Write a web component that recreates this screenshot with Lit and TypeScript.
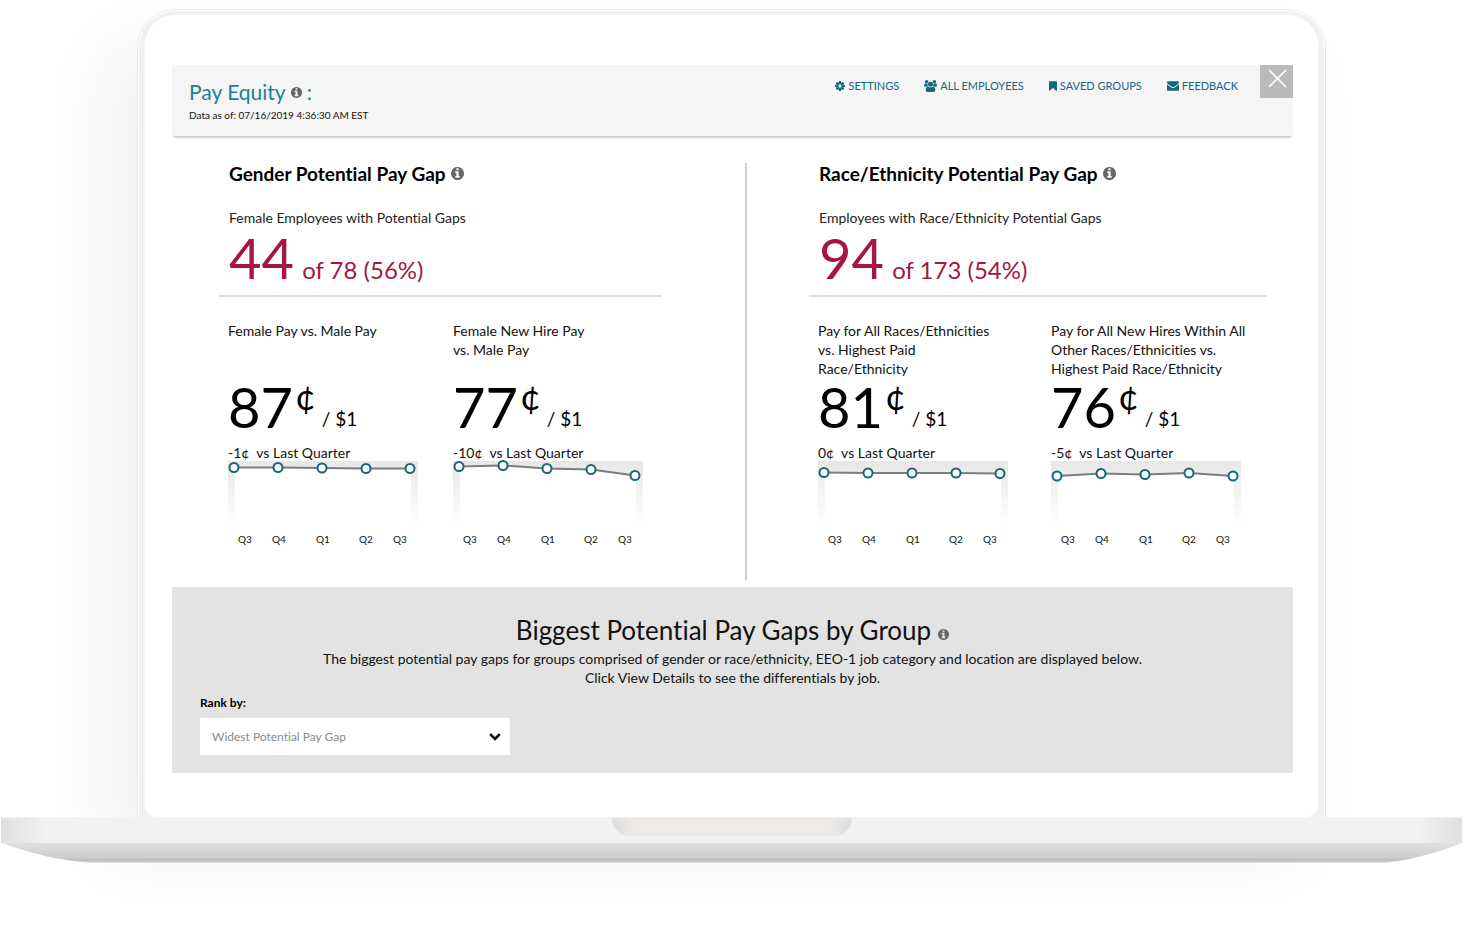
import { LitElement, html, svg, css } from "lit";
import { customElement, property } from "lit/decorators.js";

const ICONS: Record<string, { box: string; d: string }> = {
  info: {
    box: "128 128 1536 1536",
    d: "M1152 1376v-160q0-14-9-23t-23-9h-96v-512q0-14-9-23t-23-9h-320q-14 0-23 9t-9 23v160q0 14 9 23t23 9h96v320h-96q-14 0-23 9t-9 23v160q0 14 9 23t23 9h448q14 0 23-9t9-23zm-128-896v-160q0-14-9-23t-23-9h-192q-14 0-23 9t-9 23v160q0 14 9 23t23 9h192q14 0 23-9t9-23zm640 416q0 209-103 385.5t-279.5 279.5-385.5 103-385.5-103-279.5-279.5-103-385.5 103-385.5 279.5-279.5 385.5-103 385.5 103 279.5 279.5 103 385.5z",
  },
  cog: {
    box: "128 128 1536 1536",
    d: "M1152 896q0-106-75-181t-181-75-181 75-75 181 75 181 181 75 181-75 75-181zm512-109v222q0 12-8 23t-20 13l-185 28q-19 54-39 91 35 50 107 138 10 12 10 25t-9 23q-27 37-99 108t-94 71q-12 0-26-9l-138-108q-44 23-91 38-16 136-29 186-7 28-36 28h-222q-14 0-24.5-8.5t-11.5-21.5l-28-184q-49-16-90-37l-141 107q-10 9-25 9-14 0-25-11-126-114-165-168-7-10-7-23 0-12 8-23 15-21 51-66.5t54-70.5q-27-50-41-99l-183-27q-13-2-21-12.5t-8-23.5v-222q0-12 8-23t19-13l186-28q14-46 39-92-40-57-107-138-10-12-10-24 0-10 9-23 26-36 98.5-107.5t94.5-71.5q13 0 26 10l138 107q44-23 91-38 16-136 29-186 7-28 36-28h222q14 0 24.5 8.5t11.5 21.5l28 184q49 16 90 37l142-107q9-9 24-9 13 0 25 10 129 119 165 170 7 8 7 22 0 12-8 23-15 21-51 66.5t-54 70.5q26 50 41 98l183 28q13 2 21 12.5t8 23.5z",
  },
  users: {
    box: "-64 0 1920 1792",
    d: "M529 896q-162 5-265 128h-134q-82 0-138-40.5t-56-118.5q0-353 124-353 6 0 43.5 21t97.5 42.5 119 21.5q67 0 133-23-5 37-5 66 0 139 81 256zm1071 637q0 120-73 189.5t-194 69.5h-874q-121 0-194-69.5t-73-189.5q0-53 3.5-103.5t14-109 26.5-108.5 43-97.5 62-81 85.5-53.5 111.5-20q10 0 43 21.5t73 48 107 48 135 21.5 135-21.5 107-48 73-48 43-21.5q61 0 111.5 20t85.5 53.5 62 81 43 97.5 26.5 108.5 14 109 3.5 103.5zm-1024-1277q0 106-75 181t-181 75-181-75-75-181 75-181 181-75 181 75 75 181zm704 384q0 159-112.5 271.5t-271.5 112.5-271.5-112.5-112.5-271.5 112.5-271.5 271.5-112.5 271.5 112.5 112.5 271.5zm576 225q0 78-56 118.5t-138 40.5h-134q-103-123-265-128 81-117 81-256 0-29-5-66 66 23 133 23 59 0 119-21.5t97.5-42.5 43.5-21q124 0 124 353zm-128-609q0 106-75 181t-181 75-181-75-75-181 75-181 181-75 181 75 75 181z",
  },
  bookmark: {
    box: "256 128 1280 1536",
    d: "M1420 128q23 0 44 9 33 13 52.5 41t19.5 62v1289q0 34-19.5 62t-52.5 41q-19 8-44 8-48 0-83-32l-441-424-441 424q-36 33-83 33-23 0-44-9-33-13-52.5-41t-19.5-62v-1289q0-34 19.5-62t52.5-41q21-9 44-9h1048z",
  },
  mail: {
    box: "0 256 1792 1408",
    d: "M1792 710v794q0 66-47 113t-113 47h-1472q-66 0-113-47t-47-113v-794q44 49 101 87 362 246 497 345 57 42 92.5 65.5t94.5 48 110 24.5h2q51 0 110-24.5t94.5-48 92.5-65.5q170-123 498-345 57-39 100-87zm0-294q0 79-49 151t-122 123q-376 261-468 325-10 7-42.5 31t-54 38.5-52 32.5-57.5 27-50 9h-2q-23 0-50-9t-57.5-27-52-32.5-54-38.5-42.5-31q-91-64-262-182.5t-205-142.5q-62-42-117-115.5t-55-136.5q0-78 41.5-130t118.5-52h1472q65 0 112.5 47t47.5 113z",
  },
};

const icon = (name: string, cls: string) => html`
  <svg class=${cls} viewBox=${ICONS[name].box} aria-hidden="true">
    <path fill="currentColor" d=${ICONS[name].d}></path>
  </svg>
`;

interface Metric {
  label: string;
  cents: number;
  change: string;
  points: number[];
}

interface Gap {
  title: string;
  subtitle: string;
  count: number;
  rest: string;
  cls: string;
  metrics: Metric[];
}

const GAPS: Gap[] = [
  {
    title: "Gender Potential Pay Gap",
    subtitle: "Female Employees with Potential Gaps",
    count: 44,
    rest: "of 78 (56%)",
    cls: "gender",
    metrics: [
      { label: "Female Pay vs. Male Pay", cents: 87, change: "-1¢", points: [6.5, 6.5, 7, 7.5, 7.5] },
      { label: "Female New Hire Pay\nvs. Male Pay", cents: 77, change: "-10¢", points: [5.5, 4.5, 7.5, 8.5, 14.5] },
    ],
  },
  {
    title: "Race/Ethnicity Potential Pay Gap",
    subtitle: "Employees with Race/Ethnicity Potential Gaps",
    count: 94,
    rest: "of 173 (54%)",
    cls: "race",
    metrics: [
      { label: "Pay for All Races/Ethnicities\nvs. Highest Paid\nRace/Ethnicity", cents: 81, change: "0¢", points: [11.5, 12, 12, 12, 12.5] },
      { label: "Pay for All New Hires Within All\nOther Races/Ethnicities vs.\nHighest Paid Race/Ethnicity", cents: 76, change: "-5¢", points: [15, 12.5, 13.5, 12, 15] },
    ],
  },
];

@customElement("trend-chart")
export class TrendChart extends LitElement {
  @property({ attribute: false }) points: number[] = [];

  static styles = css`
    :host { display: block; }
    .chart { display: block; width: 190px; height: 86px; overflow: visible; }
    .tick { font: 10px Lato, "Liberation Sans", sans-serif; fill: #111; text-anchor: middle; }
    .line { fill: none; stroke: #7d7d7d; stroke-width: 2; }
    .dot { fill: #fff; stroke: #14687c; stroke-width: 2; }
  `;

  render() {
    const xs = [6, 50, 94, 138, 182];
    const labelXs = [17, 51, 95, 138, 172];
    const quarters = ["Q3", "Q4", "Q1", "Q2", "Q3"];
    const path = this.points.map((y, i) => `${xs[i]},${y}`).join(" ");
    return html`
      <svg class="chart" viewBox="0 0 190 86" role="img" aria-label="Quarterly trend">
        <defs>
          <linearGradient id="fade" x1="0" y1="0" x2="0" y2="1">
            <stop offset="0" stop-color="#e7e7e7"></stop>
            <stop offset="1" stop-color="#ffffff"></stop>
          </linearGradient>
        </defs>
        <rect width="190" height="62" fill="url(#fade)"></rect>
        <polygon fill="#fff" points="7,${this.points[0]} ${path} 183,${this.points[4]} 183,62 7,62"></polygon>
        <polyline class="line" points=${path}></polyline>
        ${this.points.map((y, i) => svg`<circle class="dot" cx=${xs[i]} cy=${y} r="4.5"></circle>`)}
        ${quarters.map((q, i) => svg`<text class="tick" x=${labelXs[i]} y="82">${q}</text>`)}
      </svg>
    `;
  }
}

@customElement("app-root")
export class AppRoot extends LitElement {
  static styles = css`
    :host {
      display: block;
      min-height: 100vh;
      overflow: hidden;
      background: #fff;
      color: #111;
      font-family: Lato, "Liberation Sans", sans-serif;
      font-size: 14px;
      font-variant-ligatures: none;
      line-height: 19px;
    }
    * { box-sizing: border-box; }
    h1, h2, p { margin: 0; font-weight: 400; }
    .laptop { padding-top: 9px; }
    .lid {
      margin: 0 137px;
      padding: 1px 1px 0;
      border-radius: 38px 38px 0 0;
      background: #e9e9e9;
      box-shadow: -30px 36px 70px rgba(0, 0, 0, 0.06);
    }
    .rim {
      padding: 1px 1px 0;
      border-radius: 37px 37px 0 0;
      background: #fff;
    }
    .bezel {
      padding: 4px 6px 0;
      border-radius: 36px 36px 0 0;
      background: #f1f1f1;
    }
    .screen {
      padding: 50px 25px 44px 27px;
      border-radius: 30px 30px 12px 12px;
      background: #fff;
    }
    .deck {
      position: relative;
      display: flex;
      justify-content: center;
      height: 26px;
      margin: 0 1px;
      border-top: 1px solid #f4f4f4;
      background: linear-gradient(90deg, #dfdfdf, #f2f2f2 44px, #f2f2f2 calc(100% - 44px), #dfdfdf);
    }
    .notch {
      width: 240px;
      height: 18px;
      border-radius: 0 0 18px 18px;
      background: linear-gradient(90deg, #dedddc, #edeae8 22px, #edeae8 calc(100% - 22px), #dedddc);
    }
    .belly {
      position: relative;
      height: 20px;
      margin: 0 1px;
      background: linear-gradient(#e0e0e0, #cdcdcd 15px, #bcbcbc 17px, #c4c4c4 18px, #e2e2e2);
      clip-path: polygon(0 0, 100% 0, calc(100% - 25px) 9px, calc(100% - 52px) 16px, calc(100% - 78px) 20px,
        90px 20px, 72px 18px, 48px 14px, 25px 8px);
    }
    .top {
      display: flex;
      justify-content: space-between;
      align-items: flex-start;
      height: 71px;
      border-radius: 0 0 4px 4px;
      background: #f5f5f5;
      box-shadow: 0 3px 2px -1px #ccc;
    }
    .brand { padding: 14px 0 0 17px; }
    .brand-title {
      display: flex;
      align-items: center;
      gap: 5px;
      color: #1a8199;
      font-size: 21px;
      line-height: 26px;
    }
    .stamp { font-size: 10px; line-height: 20px; color: #111; }
    .info { flex: none; color: #666; }
    .s { width: 11px; height: 11px; }
    .m { width: 13px; height: 13px; }
    .tools { display: flex; align-items: flex-start; }
    .nav { display: flex; gap: 25px; padding: 11px 22px 0 0; }
    .link {
      display: flex;
      align-items: center;
      gap: 3px;
      color: #14687c;
      font-size: 11px;
      text-decoration: none;
    }
    .cog { width: 10px; height: 10px; }
    .users { width: 13px; height: 12px; }
    .bookmark { width: 8px; height: 10px; }
    .mail { width: 12px; height: 10px; }
    .close {
      display: flex;
      align-items: flex-start;
      width: 33px;
      height: 33px;
      padding: 4px 0 0 8px;
      border: 0;
      background: #bababa;
      cursor: pointer;
    }
    .cross { display: block; width: 19px; height: 19px; }
    .panels { display: grid; grid-template-columns: 573px minmax(0, 1fr); padding: 27px 0 7px; }
    .panel { height: 417px; }
    .gender { padding-right: 83px; padding-left: 47px; }
    .race { padding-right: 26px; padding-left: 62px; border-left: 2px solid #ccc; }
    .summary { height: 134px; padding-left: 10px; border-bottom: 2px solid #dcdcdc; }
    .heading {
      display: flex;
      align-items: center;
      gap: 5px;
      font-size: 19px;
      font-weight: 700;
      line-height: 21px;
      color: #000;
    }
    .subtitle { padding-top: 24px; line-height: 20px; color: #222; }
    .count { color: #a5173f; font-size: 24px; line-height: 60px; white-space: nowrap; }
    .count .big { padding-right: 2px; }
    .big { font-size: 56px; }
    .metrics { display: grid; grid-template-columns: 225px minmax(0, 1fr); padding: 24px 0 0 9px; }
    .race .metrics { grid-template-columns: 233px minmax(0, 1fr); }
    .label { height: 57px; white-space: pre; }
    .pay { display: flex; height: 65px; color: #000; font-size: 19px; line-height: 56px; }
    .pay .big { line-height: 57px; }
    .cent { padding: 0 6px 0 2px; font-size: 36px; line-height: 36px; }
    .per { padding-top: 13px; }
    .change { height: 18px; white-space: pre; }
    .groups { padding: 26px 28px 18px; background: #e3e3e3; }
    .groups-title {
      display: flex;
      justify-content: center;
      align-items: baseline;
      gap: 7px;
      color: #111;
      font-size: 26px;
      line-height: 34px;
    }
    .lead { padding-top: 2px; text-align: center; }
    .rank { display: block; padding-top: 6px; font-size: 12px; font-weight: 700; line-height: 19px; color: #000; }
    .picker { position: relative; width: 310px; margin-top: 6px; }
    .select {
      display: block;
      width: 100%;
      height: 37px;
      padding: 0 40px 0 12px;
      border: 0;
      border-radius: 0;
      appearance: none;
      background: #fff;
      color: #8a8a8a;
      font: 12px Lato, "Liberation Sans", sans-serif;
      font-variant-ligatures: none;
    }
    .chevron { position: absolute; top: 15px; right: 9px; width: 12px; height: 8px; pointer-events: none; }
  `;

  private renderMetric(m: Metric) {
    return html`
      <article>
        <p class="label">${m.label}</p>
        <p class="pay"><span class="big">${m.cents}</span><span class="cent">¢</span><span class="per">/ $1</span></p>
        <p class="change">${m.change}  vs Last Quarter</p>
        <trend-chart .points=${m.points}></trend-chart>
      </article>
    `;
  }

  private renderGap(g: Gap) {
    return html`
      <section class="panel ${g.cls}">
        <div class="summary">
          <h2 class="heading">${g.title}${icon("info", "info m")}</h2>
          <p class="subtitle">${g.subtitle}</p>
          <p class="count"><span class="big">${g.count}</span> ${g.rest}</p>
        </div>
        <div class="metrics">${g.metrics.map((m) => this.renderMetric(m))}</div>
      </section>
    `;
  }

  render() {
    const links = [
      ["cog", "SETTINGS"],
      ["users", "ALL EMPLOYEES"],
      ["bookmark", "SAVED GROUPS"],
      ["mail", "FEEDBACK"],
    ];
    return html`
      <div class="laptop">
        <div class="lid"><div class="rim"><div class="bezel">
          <main class="screen">
            <header class="top">
              <div class="brand">
                <h1 class="brand-title">Pay Equity ${icon("info", "info s")} <span>:</span></h1>
                <p class="stamp">Data as of: 07/16/2019 4:36:30 AM EST</p>
              </div>
              <div class="tools">
                <nav class="nav">
                  ${links.map(([name, text]) => html`<a class="link" href="#">${icon(name, name)}${text}</a>`)}
                </nav>
                <button class="close" type="button" aria-label="Close">
                  <svg class="cross" viewBox="0 0 19 19" aria-hidden="true">
                    <path d="M1 1l17 17M18 1L1 18" stroke="#fff" stroke-width="1.6" fill="none"></path>
                  </svg>
                </button>
              </div>
            </header>
            <div class="panels">${GAPS.map((g) => this.renderGap(g))}</div>
            <section class="groups">
              <h2 class="groups-title">Biggest Potential Pay Gaps by Group ${icon("info", "info s")}</h2>
              <p class="lead">
                The biggest potential pay gaps for groups comprised of gender or race/ethnicity, EEO-1 job category and
                location are displayed below.<br />Click View Details to see the differentials by job.
              </p>
              <label class="rank" for="rank">Rank by:</label>
              <div class="picker">
                <select class="select" id="rank"><option>Widest Potential Pay Gap</option></select>
                <svg class="chevron" viewBox="0 0 12 8" aria-hidden="true">
                  <path d="M1.2 1.2L6 6l4.800-4.800" fill="none" stroke="#000" stroke-width="2.600"></path>
                </svg>
              </div>
            </section>
          </main>
        </div></div></div>
        <div class="deck"><div class="notch"></div></div>
        <div class="belly"></div>
      </div>
    `;
  }
}
